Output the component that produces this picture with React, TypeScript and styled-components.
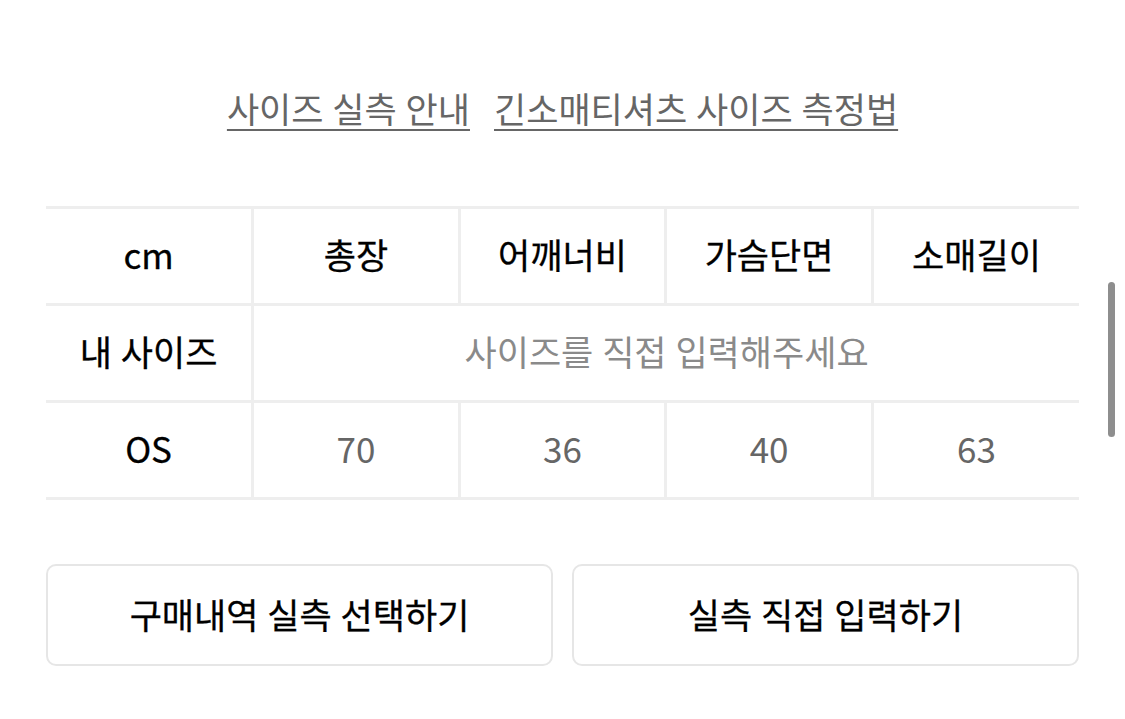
import React from "react";
import styled, { createGlobalStyle } from "styled-components";

const Global = createGlobalStyle`
  html, body { margin: 0; padding: 0; background: #fff; }
  body {
    font-family: "Noto Sans CJK KR", "Noto Sans", sans-serif;
    color: #111;
    -webkit-font-smoothing: antialiased;
  }
`;

const Page = styled.div`
  position: relative;
  width: 1125px;
  height: 719px;
  overflow: hidden;
  box-sizing: border-box;
  padding: 86px 46px 0;
`;

const LinkRow = styled.div`
  display: flex;
  justify-content: center;
  gap: 24px;
  height: 44px;
  align-items: center;
`;

const GuideLink = styled.a`
  font-size: 35px;
  line-height: 44px;
  color: #666;
  word-spacing: 1px;
  text-decoration: underline;
  text-decoration-thickness: 2px;
  text-underline-offset: 6px;
  cursor: pointer;
`;

const Table = styled.table`
  width: 100%;
  margin-top: 76px;
  border-collapse: collapse;
  table-layout: fixed;
  border-top: 3px solid #eeeeee;
`;

const Cell = styled.td<{ $head?: boolean; $muted?: boolean; $light?: boolean }>`
  height: 89px;
  padding: 0 0 5px;
  text-align: center;
  vertical-align: middle;
  font-size: 35px;
  line-height: 40px;
  word-spacing: 1px;
  font-weight: 400;
  -webkit-text-stroke: ${(p) => (p.$head ? "0.3px #000" : "0")};
  color: ${(p) => (p.$light ? "#8a8a8a" : p.$muted ? "#666" : "#000")};
  border: 3px solid #eeeeee;
  &:first-child { border-left: none; }
  &:last-child { border-right: none; }
`;

const Buttons = styled.div`
  display: grid;
  grid-template-columns: 1fr 1fr;
  gap: 19px;
  margin-top: 64px;
`;

const ActionButton = styled.button`
  height: 102px;
  box-sizing: border-box;
  border: 2px solid #e6e6e6;
  border-radius: 10px;
  background: #fff;
  padding: 0 0 4px;
  font-family: "Noto Sans CJK KR", "Noto Sans", sans-serif;
  font-size: 35px;
  font-weight: 400;
  -webkit-text-stroke: 0.3px #000;
  word-spacing: 1px;
  color: #000;
  cursor: pointer;
`;

const ScrollThumb = styled.div`
  position: absolute;
  left: 1108px;
  top: 282px;
  width: 7px;
  height: 155px;
  border-radius: 4px;
  background: #8e8e8e;
`;

const headers = ["cm", "총장", "어깨너비", "가슴단면", "소매길이"];
const values = ["70", "36", "40", "63"];

export default function App() {
  return (
    <>
      <Global />
      <Page>
        <LinkRow>
          <GuideLink>사이즈 실측 안내</GuideLink>
          <GuideLink>긴소매티셔츠 사이즈 측정법</GuideLink>
        </LinkRow>
        <Table>
          <tbody>
            <tr>
              {headers.map((h) => (
                <Cell key={h} $head>
                  {h}
                </Cell>
              ))}
            </tr>
            <tr>
              <Cell $head>내 사이즈</Cell>
              <Cell colSpan={4} $light>
                사이즈를 직접 입력해주세요
              </Cell>
            </tr>
            <tr>
              <Cell $head>OS</Cell>
              {values.map((v) => (
                <Cell key={v} $muted>
                  {v}
                </Cell>
              ))}
            </tr>
          </tbody>
        </Table>
        <Buttons>
          <ActionButton>구매내역 실측 선택하기</ActionButton>
          <ActionButton>실측 직접 입력하기</ActionButton>
        </Buttons>
        <ScrollThumb />
      </Page>
    </>
  );
}
